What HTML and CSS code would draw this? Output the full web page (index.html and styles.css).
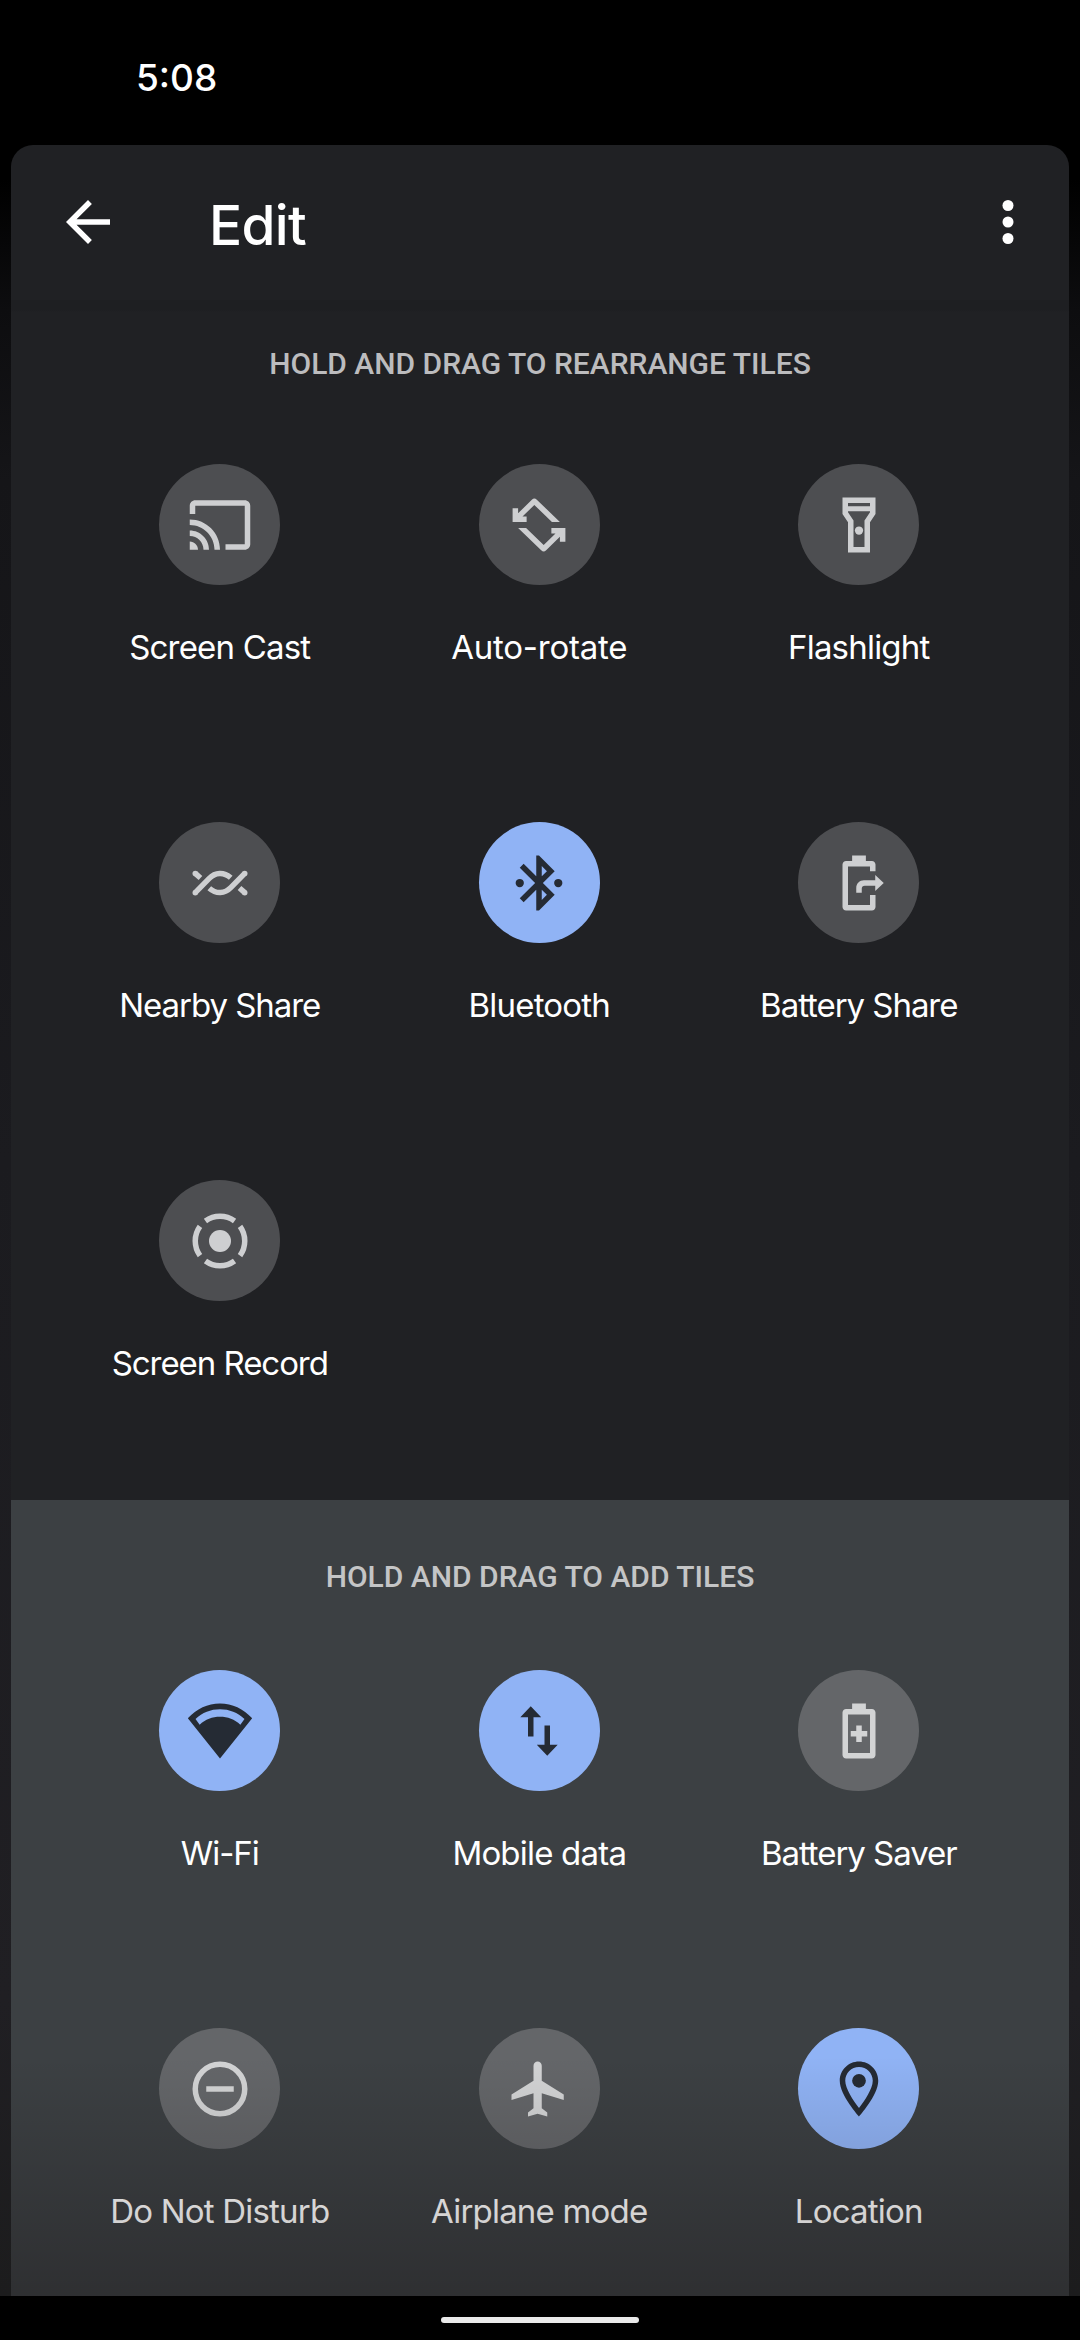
FILE: index.html
```html
<!DOCTYPE html>
<html lang="en">
<head>
<meta charset="utf-8">
<title>Edit</title>
<link rel="stylesheet" href="styles.css">
</head>
<body>
<div class="screen">
  <div class="status"><span class="clock">5:08</span></div>
  <main class="panel">
    <header class="toolbar">
      <svg class="icon" viewBox="0 0 24 24"><path d="M20 11H7.83l5.59-5.59L12 4l-8 8 8 8 1.41-1.41L7.83 13H20z"/></svg>
      <h1 class="title">Edit</h1>
      <svg class="icon" viewBox="0 0 24 24"><circle cx="12" cy="6" r="2"/><circle cx="12" cy="12" r="2"/><circle cx="12" cy="18" r="2"/></svg>
    </header>

    <section class="current">
      <h2 class="hint">HOLD AND DRAG TO REARRANGE TILES</h2>
      <div class="grid">
        <div class="tile">
          <div class="disc"><svg class="icon" viewBox="0 0 24 24"><path d="M21 3H3c-1.1 0-2 .9-2 2v3h2V5h18v14h-7v2h7c1.1 0 2-.9 2-2V5c0-1.1-.9-2-2-2zM1 18v3h3c0-1.66-1.34-3-3-3zm0-4v2c2.76 0 5 2.24 5 5h2c0-3.87-3.13-7-7-7zm0-4v2c4.97 0 9 4.03 9 9h2c0-6.08-4.93-11-11-11z"/></svg></div>
          <span class="label">Screen Cast</span>
        </div>
        <div class="tile">
          <div class="disc"><svg class="icon" viewBox="0 0 24 24"><path id="turn" d="M2.4 5.95h2v1.8L9.4 2.8a1.3 1.3 0 0 1 1.8 0l8.4 8.1h-2.9L10.3 4.7 6 8.95h1.5v1.95H2.4z"/><use href="#turn" transform="rotate(180 12 12)"/></svg></div>
          <span class="label label-loose">Auto-rotate</span>
        </div>
        <div class="tile">
          <div class="disc"><svg class="icon" viewBox="0 0 24 24"><path fill-rule="evenodd" d="M18 2H6v6l2 3v11h8V11l2-3V2zm-2 2v1.2H8V4h8zm-2 6.4V20h-4v-9.6l-2-3V7h8v.4l-2 3z"/><circle cx="12" cy="14" r="1.5"/></svg></div>
          <span class="label">Flashlight</span>
        </div>
        <div class="tile">
          <div class="disc"><svg class="icon" viewBox="0 0 24 24"><g id="strand"><path class="line" d="M3 15.5l5-5.1c2.3-2.4 5.4-2.5 7.9-.3M3 8.5l1.9 1.7"/><circle cx="3" cy="15.5" r="1"/><circle cx="3" cy="8.5" r="1"/></g><use href="#strand" transform="rotate(180 12 12)"/></svg></div>
          <span class="label label-tight">Nearby Share</span>
        </div>
        <div class="tile on">
          <div class="disc"><svg class="icon" viewBox="0 0 24 24"><path d="M17.71 7.71L12 2h-1v7.59L6.41 5 5 6.41 10.59 12 5 17.59 6.41 19 11 14.41V22h1l5.71-5.71-4.3-4.29 4.3-4.29zM13 5.83l1.88 1.88L13 9.59V5.83zm1.88 10.46L13 18.17v-3.76l1.88 1.88z"/><circle cx="5" cy="12" r="1.5"/><circle cx="19" cy="12" r="1.5"/></svg></div>
          <span class="label">Bluetooth</span>
        </div>
        <div class="tile">
          <div class="disc"><svg class="icon" viewBox="0 0 24 24"><path d="M18 7.7V5.3c0-.7-.6-1.3-1.3-1.3h-2.2V2h-5v2H7.3C6.6 4 6 4.6 6 5.3v15.4c0 .7.6 1.3 1.3 1.3h9.4c.7 0 1.3-.6 1.3-1.3v-4.3h-2V20H8V6h8v1.7z"/><path d="M11 15.5V13.8c0-1.6 1.2-2.8 2.8-2.8h4.1V9.1L21 12l-3.1 2.900V13h-3.800c-.7 0-1.100.4-1.100 1.100v1.400z"/></svg></div>
          <span class="label label-tight">Battery Share</span>
        </div>
        <div class="tile">
          <div class="disc"><svg class="icon" viewBox="0 0 24 24"><circle cx="12" cy="12" r="4"/><path class="line" d="M6.710 4.720a9 9 0 0 1 10.580 0M19.280 6.710a9 9 0 0 1 0 10.580M17.290 19.280a9 9 0 0 1-10.580 0M4.720 17.290a9 9 0 0 1 0-10.580"/></svg></div>
          <span class="label label-tight">Screen Record</span>
        </div>
      </div>
    </section>

    <section class="available">
      <h2 class="hint">HOLD AND DRAG TO ADD TILES</h2>
      <div class="grid">
        <div class="tile on">
          <div class="disc"><svg class="icon" viewBox="0 0 24 24"><path fill-rule="evenodd" d="M12 22L.3 7.400C3.500 3.900 7.500 2 12 2s8.500 1.900 11.700 5.400zM3.100 7.600l1.500 2.100C6.700 7.700 9.200 6.800 12 6.800s5.300.9 7.400 2.900l1.500-2.100C18.400 5.300 15.400 4.100 12 4.100S5.600 5.300 3.100 7.600z"/></svg></div>
          <span class="label label-tight">Wi-Fi</span>
        </div>
        <div class="tile on">
          <div class="disc"><svg class="icon" viewBox="0 0 24 24"><path d="M9 3L5.200 7H8v7h2V7h2.800zM16 17v-7h-2v7h-2.800l3.800 4 3.800-4z"/></svg></div>
          <span class="label">Mobile data</span>
        </div>
        <div class="tile">
          <div class="disc"><svg class="icon" viewBox="0 0 24 24"><path fill-rule="evenodd" d="M16.700 4h-2.200V2h-5v2H7.300C6.600 4 6 4.600 6 5.300v15.400c0 .7.6 1.300 1.300 1.300h9.400c.7 0 1.300-.6 1.300-1.300V5.300c0-.7-.6-1.300-1.300-1.300zM16 20H8V6h8z"/><path d="M11 10h2v2h2v2h-2v2h-2v-2H9v-2h2z"/></svg></div>
          <span class="label label-tight">Battery Saver</span>
        </div>
        <div class="tile">
          <div class="disc"><svg class="icon" viewBox="0 0 24 24"><circle class="line" cx="12" cy="12" r="9"/><path d="M7 11h10v2H7z"/></svg></div>
          <span class="label">Do Not Disturb</span>
        </div>
        <div class="tile">
          <div class="disc"><svg class="icon" viewBox="0 0 24 24"><path d="M21 16v-2l-8-5V3.500c0-.83-.67-1.500-1.500-1.500S10 2.670 10 3.500V9l-8 5v2l8-2.500V19l-2 1.500V22l3.500-1 3.500 1v-1.500L13 19v-5.500l8 2.500z"/></svg></div>
          <span class="label">Airplane mode</span>
        </div>
        <div class="tile on">
          <div class="disc"><svg class="icon" viewBox="0 0 24 24"><path fill-rule="evenodd" d="M12 2C8.130 2 5 5.130 5 9c0 5.250 7 13 7 13s7-7.750 7-13c0-3.870-3.130-7-7-7zM7 9c0-2.760 2.240-5 5-5s5 2.240 5 5c0 2.880-2.880 7.190-5 9.880C9.920 16.210 7 11.850 7 9z"/><circle cx="12" cy="9" r="2.500"/></svg></div>
          <span class="label">Location</span>
        </div>
      </div>
    </section>
    <div class="scrim"></div>
  </main>
  <footer class="navbar"><div class="handle"></div></footer>
</div>
</body>
</html>
```

FILE: styles.css
```css
* { box-sizing: border-box; }

body {
  margin: 0;
  background: #000;
  color: #fff;
  font-family: Inter, "Open Sans", sans-serif;
}

.screen {
  display: flex;
  flex-direction: column;
  width: 1080px;
  height: 2340px;
  overflow: hidden;
  background: linear-gradient(#000 180px, #0d0d0f 310px, #151518 480px, #1b1b1f 1160px, #201f23 2000px, #1c1c1d 2296px);
}

.status {
  flex: none;
  height: 145px;
  padding: 52px 0 0 136px;
}

.clock {
  display: block;
  font-size: 37px;
  font-weight: 500;
  line-height: 52px;
}

.panel {
  position: relative;
  display: flex;
  flex-direction: column;
  height: 2151px;
  margin: 0 11px;
  border-radius: 22px 22px 0 0;
  background: #202124;
  overflow: hidden;
}

.icon {
  flex: none;
  display: block;
  width: 66px;
  height: 66px;
  fill: currentColor;
}

.line {
  fill: none;
  stroke: currentColor;
  stroke-width: 2;
}

.toolbar {
  flex: none;
  display: flex;
  align-items: center;
  height: 155px;
  padding: 0 28px 1px 44px;
}

.title {
  flex: 1;
  margin: 5px 0 0 88px;
  font-size: 55px;
  font-weight: 500;
  line-height: 66px;
  letter-spacing: -0.7px;
}

.current {
  flex: none;
  height: 1200px;
  padding: 44px 49px 0;
  background: linear-gradient(#1e1f22 0 10px, #202124 12px);
}

.available {
  flex: 1;
  padding: 57px 49px 0;
  background: #3c4043;
}

.hint {
  margin: 0;
  color: #bcbcbe;
  font-family: Roboto, sans-serif;
  font-size: 30px;
  font-weight: 500;
  line-height: 40px;
  text-align: center;
  white-space: nowrap;
}

.available .hint { color: #c4c5c6; }

.grid {
  display: grid;
  grid-template-columns: repeat(3, 319.5px);
  grid-auto-rows: 358px;
  padding-top: 80px;
}

.available .grid { padding-top: 73px; }

.tile {
  display: flex;
  flex-direction: column;
  align-items: center;
}

.disc {
  flex: none;
  display: flex;
  align-items: center;
  justify-content: center;
  width: 121px;
  height: 121px;
  border-radius: 50%;
  background: #4d4e51;
  color: #cecfd1;
}

.available .disc { background: #646669; color: #d3d4d5; }

.tile.on .disc { background: #90b3f5; color: #252b34; }

.label {
  margin-top: 40px;
  font-size: 33px;
  line-height: 44px;
  letter-spacing: -0.8px;
  white-space: nowrap;
}

.label-tight { letter-spacing: -1.05px; }

.label-loose { letter-spacing: -0.25px; }

.scrim {
  position: absolute;
  inset: auto 0 0;
  height: 240px;
  background: linear-gradient(rgba(8, 0, 0, 0), rgba(8, 0, 0, 0.26));
}

.navbar {
  display: flex;
  justify-content: center;
  height: 44px;
  padding-top: 21px;
  background: #000;
}

.handle {
  width: 198px;
  height: 6px;
  border-radius: 3px;
  background: #e9e9e9;
}
```
